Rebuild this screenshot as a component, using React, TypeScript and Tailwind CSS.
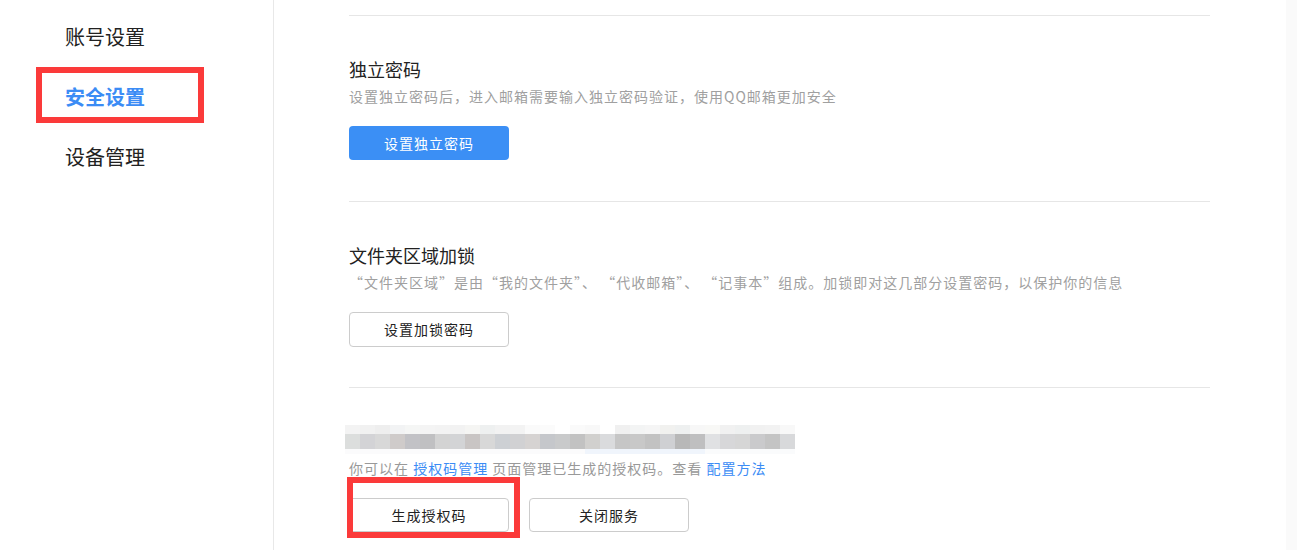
const mosaicTop = [
  "#f3f3f3", "#f1f1f1", "#eeeeee", "#f2f3f4", "#f5f6f5", "#f4f4f4", "#f3f3f3", "#f2f2f2",
  "#f5f5f3", "#eef0f0", "#f2f2f2", "#f3f3f3", "#fafafa", "#fbfbfb", "#ffffff", "#fafafa",
  "#f8f8f8", "#ffffff", "#f0f0f0", "#f3f4f4", "#f5f5f5", "#f1f1ef", "#eef0f0", "#f7f7f7",
  "#f8f8f6", "#f1f1f1", "#eef0f0", "#f1f1f1", "#f2f2f2", "#f8f8f8",
];

const mosaicBottom = [
  "#dcdedd", "#d3d3d6", "#d8d8d8", "#cfcbca", "#c2c2c6", "#c0c0c2", "#d3d3d3", "#d3d4d6",
  "#c9c5c4", "#d8d8d8", "#cdd0d4", "#d1d1d3", "#d6d3d2", "#c5c7cb", "#c9cacb", "#c2c2c2",
  "#d1d0ce", "#dadbdd", "#c6c6c6", "#c8c8c8", "#c2c2c2", "#cfd0d3", "#b8b8b8", "#bfbfc0",
  "#e0e1e3", "#d7d7d9", "#d6d6d6", "#cacacc", "#c4c4c4", "#d8d9db",
];

const menu = [
  { label: "账号设置", active: false },
  { label: "安全设置", active: true },
  { label: "设备管理", active: false },
];

function Mosaic() {
  return (
    <div className="ml-[-4px] flex w-[450px] flex-col">
      <div className="flex h-[9px]">
        {mosaicTop.map((c, i) => (
          <div key={i} className="w-[15px]" style={{ background: c }} />
        ))}
      </div>
      <div className="flex h-[15px]">
        {mosaicBottom.map((c, i) => (
          <div key={i} className="w-[15px]" style={{ background: c }} />
        ))}
      </div>
      <div className="flex h-[5px]">
        <div className="w-[240px] bg-[#fbfbfc]" />
        <div className="w-[120px] bg-[#f0f5fc]" />
        <div className="w-[90px] bg-[#fafbfc]" />
      </div>
    </div>
  );
}

export default function App() {
  return (
    <div
      lang="zh-CN"
      className="flex h-[550px] w-[1297px] overflow-hidden bg-white font-['Noto_Sans_CJK_SC','Noto_Sans',sans-serif] text-[#333]"
    >
      <aside className="relative w-[274px] shrink-0 border-r border-[#e8e8e8] pt-[7px]">
        {menu.map((m) => (
          <div
            key={m.label}
            className={`flex h-[60px] items-center pl-[65px] text-[20px] ${
              m.active ? "font-bold text-[#3b8cf5]" : "text-[#222]"
            }`}
          >
            {m.label}
          </div>
        ))}
        <div className="absolute left-[36px] top-[67px] h-[56px] w-[168px] border-[6px] border-[#fb3a3a]" />
      </aside>

      <main className="relative flex-1 pl-[75px] pt-[15px]">
        <div className="w-[861px]">
          <div className="h-px bg-[#e6e6e6]" />

          <section className="pb-[41px] pt-[41px]">
            <h3 className="text-[18px] leading-6 text-[#222]">独立密码</h3>
            <p className="mt-[5px] text-[14px] leading-5 tracking-[1px] text-[#a0a0a0]">
              设置独立密码后，进入邮箱需要输入独立密码验证，使用QQ邮箱更加安全
            </p>
            <button className="mt-[20px] h-[34px] w-[160px] rounded-[4px] bg-[#3b8ff5] text-[14px] tracking-[1px] text-white">
              设置独立密码
            </button>
          </section>

          <div className="h-px bg-[#e6e6e6]" />

          <section className="pb-[40px] pt-[41px]">
            <h3 className="text-[18px] leading-6 text-[#222]">文件夹区域加锁</h3>
            <p className="mt-[5px] whitespace-pre text-[14px] leading-5 tracking-[1px] text-[#a0a0a0]">
              “文件夹区域”是由“我的文件夹”、 “代收邮箱”、 “记事本”组成。加锁即对这几部分设置密码，以保护你的信息
            </p>
            <button className="mt-[20px] h-[35px] w-[160px] rounded-[4px] border border-[#cccccc] bg-white text-[14px] tracking-[1px] text-[#222]">
              设置加锁密码
            </button>
          </section>

          <div className="h-px bg-[#e6e6e6]" />

          <section className="pt-[37px]">
            <Mosaic />
            <p className="mt-[4px] text-[14px] leading-5 tracking-[1px] text-[#999]">
              你可以在 <span className="text-[#3b8cf5]">授权码管理</span> 页面管理已生成的授权码。查看{" "}
              <span className="text-[#3b8cf5]">配置方法</span>
            </p>
            <div className="mt-[20px] flex gap-5">
              <button className="h-[34px] w-[160px] rounded-[4px] border border-[#cccccc] bg-white text-[14px] tracking-[1px] text-[#222]">
                生成授权码
              </button>
              <button className="h-[34px] w-[160px] rounded-[4px] border border-[#cccccc] bg-white text-[14px] tracking-[1px] text-[#222]">
                关闭服务
              </button>
            </div>
          </section>
        </div>
        <div className="absolute left-[73px] top-[477px] h-[61px] w-[173px] border-[6px] border-[#fb3a3a]" />
      </main>

      <div className="w-[11px] shrink-0 bg-[#fafafa]" />
    </div>
  );
}
